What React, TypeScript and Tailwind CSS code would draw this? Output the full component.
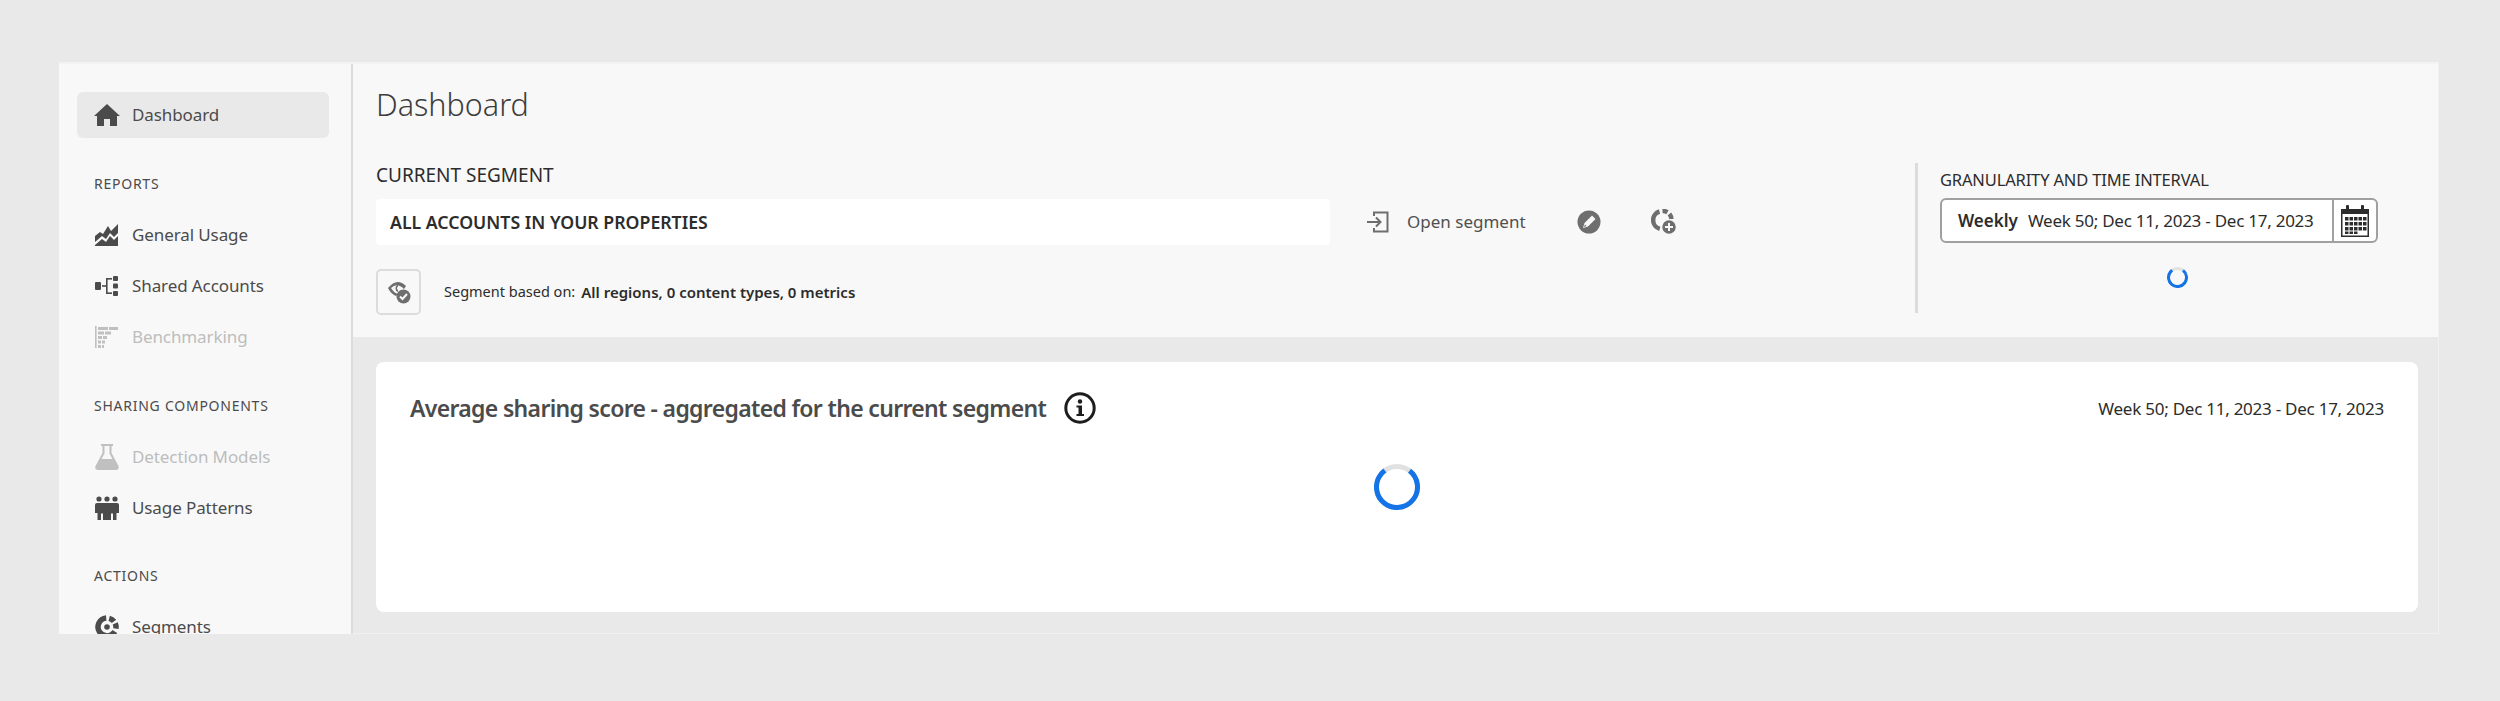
import React from "react";

const Home = () => (
  <svg viewBox="0 0 26 22" className="w-[26px] h-[22px] fill-[#4b4b4b]"><path d="M13 0 L26 12 L23 12 L23 22 L16 22 L16 15 L10 15 L10 22 L3 22 L3 12 L0 12 Z" /></svg>
);
const Chart = () => (
  <svg viewBox="0 0 24 22" className="w-[24px] h-[22px] fill-[#4b4b4b]"><path d="M0 12 L5 8 L8 10 L13 2 L16 7 L23 0 V9 L19 13 L15 9 L11 15 L7 12 L0 18 Z" /><path d="M0 21 L7 15 L11 18 L15 12 L19 16 L23 12 V22 H0 Z" /></svg>
);
const Tree = ({ c = "#4b4b4b" }: { c?: string }) => (
  <svg viewBox="0 0 24 20" className="w-[24px] h-[20px]" fill={c}><rect x="0" y="6" width="6" height="8" rx="1" /><rect x="7" y="9.2" width="5" height="1.6" /><rect x="11" y="2" width="1.6" height="16" /><rect x="11" y="2" width="6" height="1.6" /><rect x="11" y="16.4" width="6" height="1.6" /><rect x="18" y="0" width="5" height="5" rx="1" /><rect x="18" y="7.5" width="5" height="5" rx="1" /><rect x="18" y="15" width="5" height="5" rx="1" /></svg>
);
const Bench = () => (
  <svg viewBox="0 0 24 22" className="w-[24px] h-[22px] fill-[#c0c0c0]"><rect x="0" y="0" width="1.6" height="22" /><rect x="3" y="1" width="10" height="3" /><rect x="14" y="1" width="9" height="3" /><rect x="3" y="5.5" width="6" height="3" /><rect x="10" y="5.5" width="6" height="3" /><rect x="3" y="10" width="4" height="3" /><rect x="8" y="10" width="4" height="3" /><rect x="3" y="14.5" width="3" height="3" /><rect x="7" y="14.5" width="3" height="3" /><rect x="3" y="19" width="3" height="3" /><rect x="7" y="19" width="2" height="3" /></svg>
);
const Flask = () => (
  <svg viewBox="0 0 24 26" className="w-[24px] h-[26px] fill-[#c0c0c0]"><path d="M6 0 H18 V2 H16.5 V9 L23.5 22 Q24.5 26 21 26 H3 Q-0.5 26 0.5 22 L7.5 9 V2 H6 Z M9.5 2 V9.5 L6.5 15 H17.5 L14.5 9.5 V2 Z" fillRule="evenodd" /></svg>
);
const People = () => (
  <svg viewBox="0 0 24 24" className="w-[24px] h-[24px] fill-[#4b4b4b]"><circle cx="4" cy="3" r="2.6" /><circle cx="12" cy="3" r="2.6" /><circle cx="20" cy="3" r="2.6" /><path d="M0 9 Q0 7 2 7 H22 Q24 7 24 9 V17 H21.5 V24 H18 V17.5 H16 V24 H8 V17.5 H6 V24 H2.5 V17 H0 Z" /></svg>
);
const Seg = () => (
  <svg viewBox="0 0 24 24" className="w-[24px] h-[24px]" fill="none" stroke="#4b4b4b" strokeWidth="5.500"><path d="M11.2 3 A9 9 0 1 0 19.8 16.5" /><path d="M14.2 3.300 A9 9 0 0 1 19 6.400" /><path d="M20.200 8.300 A9 9 0 0 1 20.900 13.600" /><circle cx="12" cy="12" r="2.800" fill="#4b4b4b" stroke="none" /></svg>
);
const Enter = () => (
  <svg viewBox="0 0 22 22" className="w-[22px] h-[22px]" fill="none" stroke="#6e6e6e" strokeWidth="2"><path d="M7 5 V1.500 H20.500 V20.500 H7 V17" /><path d="M0 11 H13" /><path d="M9 6.500 L13.500 11 L9 15.500" /></svg>
);
const Edit = () => (
  <svg viewBox="0 0 24 24" className="w-[24px] h-[24px]"><circle cx="12" cy="12" r="11.500" fill="#6e6e6e" /><path d="M6 18 L7.500 13 L15 5.500 L18.500 9 L11 16.500 Z" fill="#f8f8f8" /><path d="M7 17 L8 14.500 L9.500 16 Z" fill="#6e6e6e" /></svg>
);
const SegPlus = () => (
  <svg viewBox="0 0 26 26" className="w-[26px] h-[26px]">
    <g fill="none" stroke="#6e6e6e" strokeWidth="4.500">
      <path d="M8.500 2.500 A9 9 0 0 0 8.800 19.800" />
      <path d="M11.500 2 A9 9 0 0 1 16.500 3.200" />
      <path d="M18.500 4.800 A9 9 0 0 1 20.300 10" />
    </g>
    <circle cx="18" cy="18" r="7.500" fill="#6e6e6e" stroke="#f8f8f8" strokeWidth="1.500" />
    <path d="M18 14 V22 M14 18 H22" stroke="#f8f8f8" strokeWidth="2" />
  </svg>
);
const EyeCheck = () => (
  <svg viewBox="0 0 24 24" className="w-[24px] h-[24px]"><path d="M1 8 Q10 -3 19 6 L17 9 Q10 2 4 8 Q7 13 11 14 L9 16 Q4 14 1 8 Z" fill="#6e6e6e" /><path d="M11 4.500 A4 4 0 0 0 11 12 L11 10 A2 2 0 0 1 11 6.500 Z" fill="#6e6e6e" /><circle cx="16.500" cy="16.500" r="7" fill="#6e6e6e" /><path d="M13 16.500 L15.500 19 L20 14" fill="none" stroke="#f8f8f8" strokeWidth="2" /></svg>
);
const Calendar = () => (
  <svg viewBox="0 0 30 32" className="w-[32px] h-[32px]" fill="#2c2c2c"><path fillRule="evenodd" d="M1 4 H29 V32 H1 Z M2.500 9 V30.500 H27.500 V9 Z" /><rect x="6" y="0" width="3" height="6" rx="1" /><rect x="21" y="0" width="3" height="6" rx="1" />
    {[6, 10.5, 15, 19.5, 24].flatMap((x) => [12, 17, 22].map((y) => <rect key={`${x}-${y}`} x={x - 1} y={y} width="3.500" height="3.500" />))}
    <rect x="5" y="26.500" width="3.500" height="2.500" /><rect x="9.500" y="26.500" width="3.500" height="2.500" /><rect x="14" y="26.500" width="3.500" height="2.500" /></svg>
);
const Info = () => (
  <svg viewBox="0 0 32 32" className="w-[32px] h-[32px]"><circle cx="16" cy="16" r="14.200" fill="none" stroke="#1d1d1d" strokeWidth="3" /><circle cx="16" cy="9.500" r="2.200" fill="#1d1d1d" /><path d="M12.500 13.500 H18 V22 H20 V24 H12.500 V22 H14.500 V15.500 H12.500 Z" fill="#1d1d1d" /></svg>
);
const Spinner = ({ size, stroke }: { size: number; stroke: number }) => {
  const r = (size - stroke) / 2;
  const c = 2 * Math.PI * r;
  const frac = 0.21;
  return (
    <svg width={size} height={size} viewBox={`0 0 ${size} ${size}`} className="block">
      <circle cx={size / 2} cy={size / 2} r={r} fill="none" stroke="#e1e1e1" strokeWidth={stroke} />
      <circle cx={size / 2} cy={size / 2} r={r} fill="none" stroke="#1473e6" strokeWidth={stroke} strokeDasharray={`${c * (1 - frac)} ${c * frac}`} transform={`rotate(${-90 + frac * 180} ${size / 2} ${size / 2})`} />
    </svg>
  );
};

function NavItem({ icon, label, disabled, active }: { icon: React.ReactNode; label: string; disabled?: boolean; active?: boolean }) {
  return (
    <div className={active ? "flex items-center h-[46px] rounded-[6px] bg-[#e9e9e9] pl-[17px]" : "flex items-center h-[51px] pl-[17px]"}>
      <span className="w-[26px] flex justify-center">{icon}</span>
      <span className={disabled ? "ml-[12px] text-[17px] tracking-[-0.1px] text-[#bdbdbd]" : "ml-[12px] text-[17px] tracking-[-0.1px] text-[#4b4b4b]"}>{label}</span>
    </div>
  );
}

function Section({ children }: { children: React.ReactNode }) {
  return <div className="pl-[17px] h-[20px] flex items-center text-[14px] tracking-[0.75px] text-[#4b4b4b]">{children}</div>;
}

export default function App() {
  return (
    <div className="h-[701px] bg-[#e9e9e9] pt-[62px] pl-[59px] pr-[61px] overflow-hidden font-['Noto_Sans',sans-serif]">
      <div className="h-[572px] flex border-t-2 border-[#f3f3f3] overflow-hidden">
        <aside className="w-[294px] shrink-0 bg-[#f8f8f8] border-r-2 border-[#dcdcdc] pl-[18px] pr-[22px] pt-[28px] overflow-hidden">
          <NavItem active icon={<Home />} label="Dashboard" />
          <div className="mt-[35px]"><Section>REPORTS</Section></div>
          <div className="mt-[16px]">
            <NavItem icon={<Chart />} label="General Usage" />
            <NavItem icon={<Tree />} label="Shared Accounts" />
            <NavItem disabled icon={<Bench />} label="Benchmarking" />
          </div>
          <div className="mt-[33px]"><Section>SHARING COMPONENTS</Section></div>
          <div className="mt-[16px]">
            <NavItem disabled icon={<Flask />} label="Detection Models" />
            <NavItem icon={<People />} label="Usage Patterns" />
          </div>
          <div className="mt-[32px]"><Section>ACTIONS</Section></div>
          <div className="mt-[16px]">
            <NavItem icon={<Seg />} label="Segments" />
          </div>
        </aside>
        <main className="flex-1 min-w-0 flex flex-col border-r border-b border-[#f1f1f1]">
          <header className="h-[273px] bg-[#f8f8f8] pl-[23px] pt-[18px] flex flex-col">
            <h1 className="text-[30.5px] leading-[44px] font-light text-[#3d3d3d]">Dashboard</h1>
            <div className="flex mt-[37px]">
              <div className="w-[954px] shrink-0">
                <div className="text-[19px] leading-[24px] text-[#2c2c2c]">CURRENT SEGMENT</div>
                <div className="mt-[12px] h-[46px] bg-white rounded-[4px] flex items-center pl-[14px] text-[17.7px] font-semibold text-[#2c2c2c]">ALL ACCOUNTS IN YOUR PROPERTIES</div>
                <div className="mt-[24px] flex items-center">
                  <div className="w-[45px] h-[46px] border-2 border-[#dcdcdc] rounded-[5px] flex items-center justify-center"><EyeCheck /></div>
                  <span className="ml-[23px] text-[14.5px] text-[#2c2c2c]">Segment based on:</span>
                  <span className="ml-[6px] text-[15px] font-semibold text-[#2c2c2c]">All regions, 0 content types, 0 metrics</span>
                </div>
              </div>
              <div className="shrink-0 w-[548px] ml-[37px] pt-[35px] flex items-start">
                <div className="h-[47px] flex items-center">
                  <Enter />
                  <span className="ml-[18px] text-[17px] text-[#505050]">Open segment</span>
                  <span className="ml-[51px]"><Edit /></span>
                  <span className="ml-[50px]"><SegPlus /></span>
                </div>
              </div>
              <div className="shrink-0 border-l-[3px] border-[#dcdcdc] h-[150px] pl-[22px] pt-[7px]">
                <div className="text-[16.5px] leading-[20px] tracking-[-0.15px] text-[#2c2c2c] whitespace-nowrap">GRANULARITY AND TIME INTERVAL</div>
                <div className="mt-[8px] w-[438px] h-[45px] bg-white border-2 border-[#a0a0a0] rounded-[6px] flex items-center overflow-hidden">
                  <div className="flex-1 min-w-0 flex items-center pl-[16px] text-[17px] text-[#2c2c2c] whitespace-nowrap">
                    <span className="font-semibold">Weekly</span>
                    <span className="ml-[10px] tracking-[-0.25px]">Week 50; Dec 11, 2023 - Dec 17, 2023</span>
                  </div>
                  <div className="w-[44px] shrink-0 h-full border-l-2 border-[#a0a0a0] flex items-center justify-center"><Calendar /></div>
                </div>
                <div className="mt-[24px] ml-[227px]"><Spinner size={21} stroke={3} /></div>
              </div>
            </div>
          </header>
          <div className="flex-1 pl-[23px] pr-[20px] pt-[25px]">
            <section className="h-[250px] bg-white rounded-[8px]">
              <div className="flex items-center justify-between px-[34px] pt-[29px]">
                <div className="flex items-center">
                  <h2 className="text-[23px] tracking-[-0.67px] font-semibold text-[#4b4b4b]">Average sharing score - aggregated for the current segment</h2>
                  <span className="ml-[18px]"><Info /></span>
                </div>
                <span className="text-[17px] tracking-[-0.25px] text-[#2c2c2c]">Week 50; Dec 11, 2023 - Dec 17, 2023</span>
              </div>
              <div className="mt-[38px] flex justify-center"><Spinner size={46} stroke={5} /></div>
            </section>
          </div>
        </main>
      </div>
    </div>
  );
}
